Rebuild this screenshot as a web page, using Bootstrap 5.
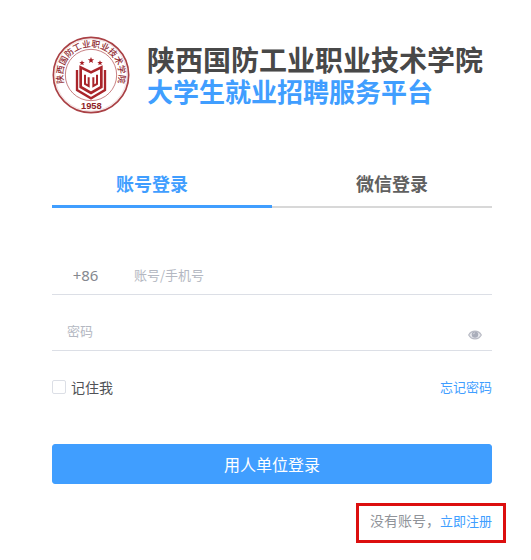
<!DOCTYPE html>
<html lang="zh-CN">
<head>
<meta charset="utf-8">
<meta name="viewport" content="width=device-width, initial-scale=1">
<title>大学生就业招聘服务平台</title>
<link href="https://cdn.jsdelivr.net/npm/bootstrap@5.3.0/dist/css/bootstrap.min.css" rel="stylesheet">
<style>
  :root { --brand: #409eff; --ink: #484848; --line: #dcdfe6; }
  body { font-family: "Noto Sans", "Noto Sans CJK SC", sans-serif; font-size: 14px; line-height: 20px; color: #606266; background: #fff; }
  .login-page { padding: 36px 39px 16px 52px; }
  .cjk { font-family: "Noto Sans CJK SC", sans-serif; }
  .brand-bar { gap: 17px; margin-bottom: 48px; }
  .brand-text { padding-bottom: 4px; }
  .seal { width: 78px; height: 78px; }
  .school-name { font-size: 28px; line-height: 36px; font-weight: 700; color: var(--ink); }
  .platform-name { font-size: 26px; line-height: 28px; font-weight: 700; color: var(--brand); }
  .login-tabs { box-shadow: inset 0 -2px #d8d8d8; margin-bottom: 48px; }
  .login-tabs .nav-link { width: 100%; height: 46px; padding: 0 20px 2px 0; border: 0; border-radius: 0; border-bottom: 3px solid transparent; background: none; font-size: 18px; font-weight: 700; color: #606060; }
  .login-tabs .nav-item + .nav-item .nav-link { padding: 0 0 2px 20px; }
  .login-tabs .nav-link.active { color: var(--brand); border-bottom-color: var(--brand); }
  .line-field { border-bottom: 1px solid var(--line); margin-bottom: 17px; }
  .line-field .form-control { height: 38px; padding: 0 15px 2px; font-size: 13px; box-shadow: none; }
  .line-field .form-control::placeholder { color: #b4b8c2; }
  .line-field .prefix { width: 67px; font-size: 15px; color: #85888f; }
  .eye-button { width: 34px; height: 38px; padding: 8px 0 0; }
  .options-row { margin: 26px 0 47px; }
  .options-row .remember { gap: 5px; }
  .options-row .form-check-input { width: 14px; height: 14px; margin: 0; border-color: var(--line); border-radius: 2px; box-shadow: none; }
  .options-row label { color: #505256; }
  .small-link { font-size: 13px; color: var(--brand); }
  .login-button { height: 40px; padding: 0; font-size: 16px; border-radius: 3px; --bs-btn-bg: #409eff; --bs-btn-border-color: #409eff; --bs-btn-color: #fff; --bs-btn-hover-color: #fff; --bs-btn-hover-bg: #66b1ff; --bs-btn-hover-border-color: #66b1ff; }
  .register-box { border: 3px solid #dc0f0f; padding: 4px 11px 9px; margin: 19px -14px 0 0; color: #909399; }
</style>
<script src="https://cdn.jsdelivr.net/npm/bootstrap@5.3.0/dist/js/bootstrap.bundle.min.js"></script>
</head>
<body>
<main class="login-page">
  <header class="brand-bar d-flex align-items-center">
    <svg class="seal flex-shrink-0" viewBox="22 16 234 234" role="img" aria-label="校徽">
      <defs>
        <path id="sealArc" d="M68 178 A84 84 0 1 1 210 178"/>
        <path id="star" d="M0-10 2.6-3.3 9.5-3.1 4.1 1.3 5.9 8.1 0 4.2-5.9 8.1-4.1 1.3-9.5-3.1-2.6-3.3Z"/>
      </defs>
      <g fill="none" stroke="#aa4145">
        <circle cx="139" cy="133" r="113" stroke-width="5"/>
        <circle cx="139" cy="133" r="108" stroke-width="1" opacity=".5"/>
        <circle cx="139" cy="133" r="77" stroke-width="2"/>
      </g>
      <text font-family="Noto Sans CJK SC, sans-serif" font-weight="500" font-size="26" fill="#8f2930" text-anchor="middle"><textPath href="#sealArc" startOffset="50%">陕西国防工业职业技术学院</textPath></text>
      <g fill="#a51d24">
        <use href="#star" transform="translate(139 89)"/>
        <use href="#star" transform="translate(112 97) scale(.85)"/>
        <use href="#star" transform="translate(166 97) scale(.85)"/>
      </g>
      <g fill="none" stroke="#a9252b">
        <path stroke-width="7" d="M97 118V178L139 203 181 178V118"/>
        <path stroke-width="8" d="M108 110V169L139 187 170 169V110L139 125Z"/>
        <path stroke-width="6" d="M121 132V160L132 166V140M157 132V160L146 166V140"/>
      </g>
      <text x="140" y="235" text-anchor="middle" font-family="Liberation Sans, sans-serif" font-weight="700" font-size="28" fill="#8f2026">1958</text>
    </svg>
    <div class="brand-text cjk text-nowrap">
      <h1 class="school-name mb-0">陕西国防工业职业技术学院</h1>
      <div class="platform-name">大学生就业招聘服务平台</div>
    </div>
  </header>

  <ul class="login-tabs nav nav-fill cjk" role="tablist">
    <li class="nav-item" role="presentation"><button class="nav-link active" type="button" role="tab" aria-selected="true">账号登录</button></li>
    <li class="nav-item" role="presentation"><button class="nav-link" type="button" role="tab" aria-selected="false">微信登录</button></li>
  </ul>

  <form>
    <div class="line-field d-flex align-items-center">
      <label class="prefix text-center flex-shrink-0" for="account">+86</label>
      <input class="form-control border-0 bg-transparent cjk" id="account" type="text" placeholder="账号/手机号" aria-label="账号/手机号">
    </div>
    <div class="line-field d-flex align-items-center">
      <input class="form-control border-0 bg-transparent cjk" id="password" type="password" placeholder="密码" aria-label="密码">
      <button class="eye-button btn border-0 flex-shrink-0 d-flex align-items-center justify-content-center" type="button" aria-label="显示密码">
        <svg width="14" height="10" viewBox="0 0 14 10" aria-hidden="true">
          <path d="M.7 5C3.5-.2 10.5-.2 13.3 5 10.5 10.2 3.5 10.2.7 5Z" fill="#e6e7ec" stroke="#b9bbc5" stroke-width="1.2"/>
          <circle cx="7" cy="4.6" r="3.2" fill="#a9adba"/>
          <path d="M5.3 4.3Q5.5 3 6.9 2.9" fill="none" stroke="#e4e5ea" stroke-width=".8"/>
        </svg>
      </button>
    </div>
    <div class="options-row d-flex align-items-center justify-content-between cjk">
      <div class="remember d-flex align-items-center">
        <input class="form-check-input" type="checkbox" id="remember">
        <label for="remember">记住我</label>
      </div>
      <a class="small-link text-decoration-none" href="#">忘记密码</a>
    </div>
    <button class="login-button btn w-100 cjk" type="submit">用人单位登录</button>
  </form>

  <div class="d-flex justify-content-end cjk">
    <div class="register-box text-nowrap">没有账号，<a class="small-link text-decoration-none" href="#">立即注册</a></div>
  </div>
</main>
</body>
</html>
